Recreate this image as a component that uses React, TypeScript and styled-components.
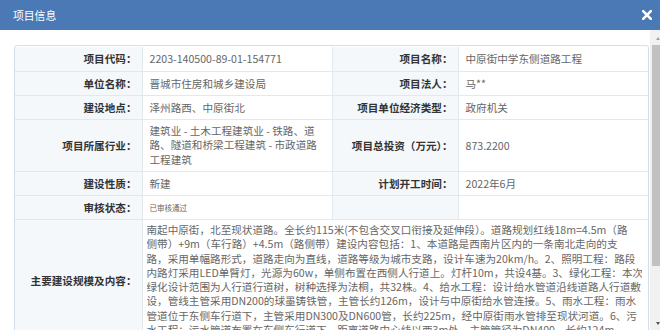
import React from "react";
import styled, { createGlobalStyle } from "styled-components";

const GlobalStyle = createGlobalStyle`
  html, body { margin: 0; padding: 0; background: #ffffff; overflow: hidden; }
  body { font-family: "Noto Sans CJK SC", "Noto Sans", "Liberation Sans", sans-serif; }
`;

const Dialog = styled.div`
  width: 660px;
  height: 330px;
  display: flex;
  flex-direction: column;
  background: #ffffff;
  overflow: hidden;
`;

const Header = styled.div`
  height: 30px;
  flex: none;
  background: #4a79b6;
  display: flex;
  align-items: center;
  justify-content: space-between;
  padding: 0 8px 0 13px;
`;

const Title = styled.span`
  color: #ffffff;
  font-size: 10.8px;
  line-height: 14px;
`;

const Close = styled.button`
  border: 0;
  background: transparent;
  padding: 0;
  width: 10px;
  height: 10px;
  display: flex;
  cursor: pointer;
`;

const Body = styled.div`
  flex: 1;
  display: flex;
  min-height: 0;
`;

const Content = styled.div`
  flex: 1;
  padding: 15px 1px 0 14px;
  overflow: hidden;
`;

const Frame = styled.div`
  border: 1px solid #d3e0eb;
  border-radius: 3px;
  padding: 1px 0 0 0;
  box-shadow: 0 0 1px #e4edf4;
`;

const Table = styled.table`
  width: 100%;
  border-collapse: collapse;
  table-layout: fixed;
  font-size: 10.6px;
`;

const Label = styled.th`
  background: #f4f8fb;
  color: #333333;
  font-weight: bold;
  text-align: right;
  padding: 4px 5px 4px 4px;
  line-height: 15px;
  border-right: 1px solid #e1e8ee;
  border-bottom: 1px solid #e1e8ee;
  vertical-align: middle;
  white-space: nowrap;
`;

const Value = styled.td<{ $small?: boolean; $tight?: boolean; $last?: boolean }>`
  background: #ffffff;
  color: #666666;
  text-align: left;
  padding: ${(p) => (p.$tight ? "3px 6px 3px 4px" : "4px 6px 4px 7px")};
  line-height: 15px;
  font-size: ${(p) => (p.$small ? "7.5px" : "10.6px")};
  border-right: ${(p) => (p.$last ? "0" : "1px solid #e1e8ee")};
  border-bottom: 1px solid #e1e8ee;
  vertical-align: middle;
`;

const Row = styled.tr<{ $h?: number }>`
  height: ${(p) => (p.$h ? `${p.$h}px` : "auto")};
`;

const Lines = styled.div<{ $lh: number }>`
  line-height: ${(p) => p.$lh}px;
  white-space: nowrap;
  overflow: hidden;
`;

const Line = styled.div``;

const ScrollBar = styled.div`
  width: 10px;
  flex: none;
  background: #f1f1f1;
  display: flex;
  flex-direction: column;
`;

const ArrowButton = styled.div<{ $down?: boolean }>`
  height: 13px;
  flex: none;
  display: flex;
  align-items: center;
  padding-left: 6px;
  padding-top: ${(p) => (p.$down ? "0" : "2px")};
`;

const Arrow = styled.div<{ $down?: boolean; $dark?: boolean }>`
  width: 0;
  height: 0;
  border-left: 2.5px solid transparent;
  border-right: 2.5px solid transparent;
  ${(p) =>
    p.$down
      ? `border-top: 3px solid ${p.$dark ? "#505050" : "#a3a3a3"};`
      : `border-bottom: 3px solid ${p.$dark ? "#505050" : "#a3a3a3"};`}
`;

const Track = styled.div`
  flex: 1;
  display: flex;
  flex-direction: column;
  padding: 0 0 0 2px;
`;

const Thumb = styled.div`
  height: 221px;
  background: #c1c1c1;
`;

const industry = [
  "建筑业 - 土木工程建筑业 - 铁路、道",
  "路、隧道和桥梁工程建筑 - 市政道路",
  "工程建筑",
];

const scope = [
  "南起中原街，北至现状道路。全长约115米(不包含交叉口衔接及延伸段）。道路规划红线18m=4.5m（路",
  "侧带）+9m（车行路）+4.5m（路侧带）建设内容包括：1、本道路是西南片区内的一条南北走向的支",
  "路，采用单幅路形式，道路走向为直线，道路等级为城市支路，设计车速为20km/h。2、照明工程：路段",
  "内路灯采用LED单臂灯，光源为60w，单侧布置在西侧人行道上。灯杆10m，共设4基。3、绿化工程：本次",
  "绿化设计范围为人行道行道树，树种选择为法桐，共32株。4、给水工程：设计给水管道沿线道路人行道敷",
  "设，管线主管采用DN200的球墨铸铁管，主管长约126m，设计与中原街给水管连接。5、雨水工程：雨水",
  "管道位于东侧车行道下，主管采用DN300及DN600管，长约225m，经中原街雨水管排至现状河道。6、污",
  "水工程：污水管道布置在东侧车行道下，距离道路中心线以西3m处，主管管径为DN400，长约124m。",
];

export default function App() {
  return (
    <>
      <GlobalStyle />
      <Dialog>
        <Header>
          <Title>项目信息</Title>
          <Close aria-label="关闭">
            <svg width="10" height="10" viewBox="0 0 10 10">
              <path d="M1.2 1.2 L8.8 8.8 M8.8 1.2 L1.2 8.8" stroke="#ffffff" strokeWidth="2.6" strokeLinecap="square" />
            </svg>
          </Close>
        </Header>
        <Body>
          <Content>
            <Frame>
              <Table>
                <colgroup>
                  <col style={{ width: 127 }} />
                  <col style={{ width: 190 }} />
                  <col style={{ width: 126 }} />
                  <col />
                </colgroup>
                <tbody>
                  <Row $h={24}>
                    <Label>项目代码：</Label>
                    <Value>2203-140500-89-01-154771</Value>
                    <Label>项目名称：</Label>
                    <Value $last>中原街中学东侧道路工程</Value>
                  </Row>
                  <Row $h={23}>
                    <Label>单位名称：</Label>
                    <Value>晋城市住房和城乡建设局</Value>
                    <Label>项目法人：</Label>
                    <Value $last>马**</Value>
                  </Row>
                  <Row $h={23}>
                    <Label>建设地点：</Label>
                    <Value>泽州路西、中原街北</Value>
                    <Label>项目单位经济类型：</Label>
                    <Value $last>政府机关</Value>
                  </Row>
                  <Row $h={52}>
                    <Label>项目所属行业：</Label>
                    <Value>
                      <Lines $lh={14.5}>
                        {industry.map((l) => (
                          <Line key={l}>{l}</Line>
                        ))}
                      </Lines>
                    </Value>
                    <Label>项目总投资（万元）：</Label>
                    <Value $last>873.2200</Value>
                  </Row>
                  <Row $h={23}>
                    <Label>建设性质：</Label>
                    <Value>新建</Value>
                    <Label>计划开工时间：</Label>
                    <Value $last>2022年6月</Value>
                  </Row>
                  <Row $h={24}>
                    <Label>审核状态：</Label>
                    <Value $small>已审核通过</Value>
                    <Label></Label>
                    <Value $last></Value>
                  </Row>
                  <Row>
                    <Label>主要建设规模及内容：</Label>
                    <Value colSpan={3} $tight $last>
                      <Lines $lh={14.3}>
                        {scope.map((l) => (
                          <Line key={l}>{l}</Line>
                        ))}
                      </Lines>
                    </Value>
                  </Row>
                </tbody>
              </Table>
            </Frame>
          </Content>
          <ScrollBar>
            <ArrowButton>
              <Arrow />
            </ArrowButton>
            <Track>
              <Thumb />
            </Track>
            <ArrowButton $down>
              <Arrow $down $dark />
            </ArrowButton>
          </ScrollBar>
        </Body>
      </Dialog>
    </>
  );
}
